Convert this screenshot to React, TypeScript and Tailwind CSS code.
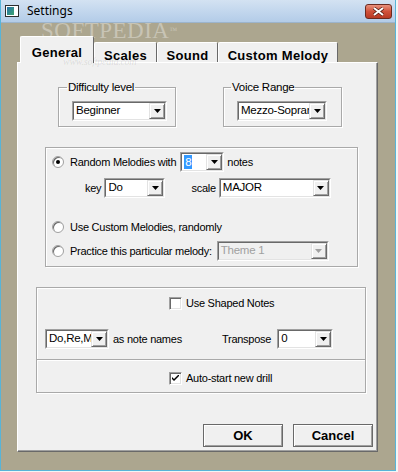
import React from 'react';

const Arrow = ({ disabled }: { disabled?: boolean }) => (
  <svg width="7" height="4" viewBox="0 0 7 4">
    <path d="M0 0h7L3.5 4z" fill={disabled ? '#a0a0a0' : '#000'} />
  </svg>
);

interface ComboProps {
  text: string;
  className?: string;
  disabled?: boolean;
  highlight?: boolean;
}

const Combo: React.FC<ComboProps> = ({ text, className = '', disabled, highlight }) => (
  <div
    className={`flex h-[20px] border border-t-[#a0a0a0] border-l-[#a0a0a0] border-b-white border-r-white ${className}`}
  >
    <div
      className={`flex flex-1 min-w-0 border border-t-[#696969] border-l-[#696969] border-b-[#e3e3e3] border-r-[#e3e3e3] ${
        disabled ? 'bg-[#f0f0f0]' : 'bg-white'
      }`}
    >
      <div className="flex-1 min-w-0 overflow-hidden whitespace-nowrap flex items-center pl-[2px] text-[11.5px]">
        {highlight ? (
          <span className="bg-[#3399ff] text-white leading-[14px] px-[1px]">{text}</span>
        ) : (
          <span className={disabled ? 'text-[#a0a0a0]' : 'text-black'}>{text}</span>
        )}
      </div>
      <div className="w-[16px] h-full flex items-center justify-center bg-[#f0f0f0] border border-t-[#e3e3e3] border-l-[#e3e3e3] border-b-[#696969] border-r-[#696969] shadow-[inset_1px_1px_0_white,inset_-1px_-1px_0_#a0a0a0]">
        <Arrow disabled={disabled} />
      </div>
    </div>
  </div>
);

const Radio = ({ checked }: { checked?: boolean }) => (
  <div className="w-[12px] h-[12px] rounded-full border border-[#a0a0a0] bg-white flex items-center justify-center shadow-[inset_1px_1px_0_#696969]">
    {checked && <div className="w-[4px] h-[4px] rounded-full bg-black" />}
  </div>
);

const Checkbox = ({ checked }: { checked?: boolean }) => (
  <div className="w-[13px] h-[13px] border border-t-[#a0a0a0] border-l-[#a0a0a0] border-b-white border-r-white bg-white shadow-[inset_1px_1px_0_#696969,inset_-1px_-1px_0_#e3e3e3] flex items-center justify-center">
    {checked && (
      <svg width="7" height="7" viewBox="0 0 7 7">
        <path d="M0 2l2 2 5-5v2l-5 5-2-2z" fill="#000" />
      </svg>
    )}
  </div>
);

const Button = ({ label }: { label: string }) => (
  <div className="w-[80px] h-[23px] flex items-center justify-center bg-[#f0f0f0] border border-[#696969] shadow-[inset_1px_1px_0_white,inset_-1px_-1px_0_#a0a0a0] font-bold text-[13px] text-black">
    {label}
  </div>
);

const tabs = ['Scales', 'Sound', 'Custom Melody'];
const tabWidths = ['w-[63px]', 'w-[61px]', 'w-[120px]'];

export default function App() {
  return (
    <div className="w-[398px] h-[472px] bg-[#f4f4f4] overflow-hidden" style={{ fontFamily: '"Liberation Sans", Arial, sans-serif' }}>
      <div className="relative w-[396px] h-[471px] border-l border-r border-b border-[#58b4d8] bg-[#aca68f] flex flex-col">
        {/* title bar */}
        <div className="h-[23px] flex items-center bg-gradient-to-b from-[#d3e2f2] to-[#b3cce8] border-b border-[#9cb4cc]">
          <div className="ml-[4px] w-[14px] h-[12px] border border-[#2d2d2d] bg-white p-[1px] flex">
            <div className="flex-1 bg-gradient-to-br from-[#2a6fa8] to-[#3fa36a]" />
            <div className="w-[3px] bg-white" />
          </div>
          <span className="ml-[8px] text-[12px] text-black" style={{ fontFamily: '"Noto Sans", sans-serif' }}>
            Settings
          </span>
          <div className="ml-auto mr-[3px] w-[27px] h-[15px] rounded-[3px] border border-[#6b2a20] bg-gradient-to-b from-[#e8907c] via-[#d0513a] to-[#b83a24] flex items-center justify-center">
            <svg width="11" height="9" viewBox="0 0 11 9">
              <path d="M1 1l9 7M10 1L1 8" stroke="#5a1e14" strokeWidth="3.4" />
              <path d="M1 1l9 7M10 1L1 8" stroke="#fff" strokeWidth="2" />
            </svg>
          </div>
        </div>

        {/* watermark */}
        <div className="absolute left-[40px] top-[21px] leading-[20px] text-[23px] text-white/35 tracking-[0.5px]" style={{ fontFamily: '"Liberation Serif", serif' }}>
          SOFTPEDIA<span className="text-[8px] align-top">™</span>
        </div>

        <div className="pt-[13px] pl-[16px]">
          <div className="w-[361px]">
            {/* tabs */}
            <div className="h-[26px] flex items-end pl-[3px] relative z-10">
              <div className="w-[74px] h-[27px] -mb-[1px] bg-[#f0f0f0] border-t border-l border-white border-r border-r-[#696969] rounded-t-[2px] flex justify-center pt-[6px] font-bold text-[13px] tracking-[0.3px] text-black">
                General
              </div>
              {tabs.map((t, i) => (
                <div
                  key={t}
                  className={`${tabWidths[i]} h-[20px] bg-[#f0f0f0] border-t border-l border-white border-r border-r-[#696969] rounded-t-[2px] flex justify-center pt-[3px] font-bold text-[13px] tracking-[0.3px] text-black`}
                >
                  {t}
                </div>
              ))}
            </div>

            {/* page */}
            <div className="relative h-[390px] bg-[#f0f0f0] border border-t-white border-l-white border-r-[#696969] border-b-[#696969] shadow-[inset_-1px_-1px_0_#a0a0a0] text-[11px] tracking-[-0.25px] text-black">
              <div className="absolute left-[45px] top-[-9px] text-[10px] italic text-black/10 z-20" style={{ fontFamily: '"Liberation Serif", serif' }}>
                www.softpedia.com
              </div>

              {/* difficulty / voice */}
              <div className="flex mt-[17px]">
                <fieldset className="ml-[40px] w-[118px] border border-[#a9a9a9] shadow-[inset_1px_1px_0_white,1px_1px_0_white] pb-[5px]">
                  <legend className="ml-[8px] px-[1px] leading-[14px] text-[11.5px]">Difficulty level</legend>
                  <Combo text="Beginner" className="ml-[13px] mt-[7px] w-[95px]" />
                </fieldset>
                <fieldset className="ml-[47px] w-[119px] border border-[#a9a9a9] shadow-[inset_1px_1px_0_white,1px_1px_0_white] pb-[5px]">
                  <legend className="ml-[7px] px-[1px] leading-[14px] text-[11.5px]">Voice Range</legend>
                  <Combo text="Mezzo-Soprano" className="ml-[13px] mt-[7px] w-[90px]" />
                </fieldset>
              </div>

              {/* melody source */}
              <div className="ml-[27px] mt-[20px] w-[313px] h-[120px] border border-[#a9a9a9] shadow-[inset_1px_1px_0_white,1px_1px_0_white]">
                <div className="flex items-center mt-[4px] pl-[6px] h-[20px]">
                  <Radio checked />
                  <span className="ml-[6px]">Random Melodies with</span>
                  <Combo text="8" highlight className="ml-[4px] w-[44px]" />
                  <span className="ml-[3px]">notes</span>
                </div>
                <div className="flex items-center mt-[6px] pl-[39px] h-[20px]">
                  <span>key</span>
                  <Combo text="Do" className="ml-[3px] w-[61px]" />
                  <span className="ml-[26px]">scale</span>
                  <Combo text="MAJOR" className="ml-[3px] w-[112px]" />
                </div>
                <div className="flex items-center mt-[21px] pl-[6px] h-[16px]">
                  <Radio />
                  <span className="ml-[6px]">Use Custom Melodies, randomly</span>
                </div>
                <div className="flex items-center mt-[6px] pl-[6px] h-[20px]">
                  <Radio />
                  <span className="ml-[6px]">Practice this particular melody:</span>
                  <Combo text="Theme 1" disabled className="ml-[5px] w-[112px]" />
                </div>
              </div>

              {/* notes options */}
              <div className="ml-[18px] mt-[20px] w-[330px] h-[106px] border border-[#a9a9a9] shadow-[inset_1px_1px_0_white,1px_1px_0_white]">
                <div className="flex items-center mt-[7px] pl-[132px] h-[16px]">
                  <Checkbox />
                  <span className="ml-[4px]">Use Shaped Notes</span>
                </div>
                <div className="flex items-center mt-[18px] pl-[8px] h-[20px]">
                  <Combo text="Do,Re,Mi" className="w-[64px]" />
                  <span className="ml-[4px]">as note names</span>
                  <span className="ml-[40px]">Transpose</span>
                  <Combo text="0" className="ml-[6px] w-[56px]" />
                </div>
                <div className="mt-[10px] h-[2px] border-t border-[#a9a9a9] border-b border-b-white" />
                <div className="flex items-center mt-[9px] pl-[132px] h-[16px]">
                  <Checkbox checked />
                  <span className="ml-[4px]">Auto-start new drill</span>
                </div>
              </div>

              {/* buttons */}
              <div className="flex mt-[31px] pl-[185px] gap-[10px] tracking-normal">
                <Button label="OK" />
                <Button label="Cancel" />
              </div>
            </div>
          </div>
        </div>
      </div>
    </div>
  );
}
